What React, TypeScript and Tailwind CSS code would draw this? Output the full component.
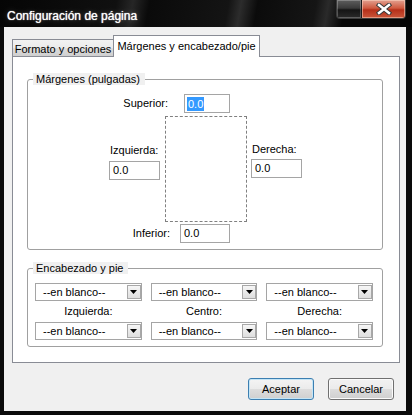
import React from "react";

function Field({ value, selected = false, width }: { value: string; selected?: boolean; width: string }) {
  return (
    <div className={`h-[19px] border border-[#a5a5a5] bg-white flex items-center pl-[2px] ${width}`}>
      <span className={selected ? "bg-[#3399ff] text-white px-[1px] leading-[14px]" : "px-[1px]"}>{value}</span>
    </div>
  );
}

function Combo() {
  return (
    <div className="h-[18px] border border-[#a5a5a5] bg-white flex items-center pl-[7px]">
      <span className="flex-1">--en blanco--</span>
      <div className="w-[14px] h-[14px] border border-[#a8a8a8] bg-[linear-gradient(#f6f6f6,#dedede)] flex items-center justify-center">
        <svg width="7" height="4" viewBox="0 0 7 4">
          <path d="M0 0h7L3.5 4z" fill="#000" />
        </svg>
      </div>
    </div>
  );
}

export default function App() {
  return (
    <div className="w-[412px] h-[415px] bg-[#0a0a0a] flex flex-col font-['Liberation_Sans',Arial,sans-serif] text-[11px] text-black overflow-hidden">
      {/* Title bar */}
      <div className="h-[27px] flex items-start bg-[linear-gradient(100deg,#050505_0%,#101010_28%,#262626_32%,#0a0a0a_36%,#141414_55%,#2c2c2c_58%,#0b0b0b_62%,#151515_76%,#2a2a2a_79%,#060606_83%)]">
        <span className="text-white text-[12px] leading-none pl-[7px] pt-[10px] [text-shadow:0_0_1px_#fff,0_0_6px_rgba(255,255,255,0.3)]">
          Configuración de página
        </span>
        <div className="ml-auto mr-[6px] flex h-[19px] border border-t-0 border-[#3c3c3c] rounded-b-[4px] overflow-hidden">
          <div className="w-[25px] h-full border-r border-[#1a1a1a] bg-[linear-gradient(#5e5e5e,#3a3a3a_45%,#151515_55%,#2a2a2a)] shadow-[inset_0_0_0_1px_rgba(255,255,255,0.25)]" />
          <div className="w-[43px] h-full flex items-center justify-center bg-[linear-gradient(#e2a090,#cf5a40_45%,#b5301a_55%,#c9563a)] shadow-[inset_0_0_0_1px_rgba(255,220,200,0.5)]">
            <svg width="16" height="12" viewBox="0 0 16 12">
              <path d="M3 2L13 10M13 2L3 10" stroke="#3a3a3a" strokeWidth="4.5" strokeLinecap="square" />
              <path d="M3 2L13 10M13 2L3 10" stroke="#fff" strokeWidth="2.5" strokeLinecap="square" />
            </svg>
          </div>
        </div>
      </div>

      {/* Client area */}
      <div className="flex-1 ml-[4px] mr-[6px] mb-[4px] bg-[#f0f0f0] flex flex-col pl-[8px] pt-[8px]">
        {/* Tabs */}
        <div className="flex items-end h-[22px] -mb-px relative z-10">
          <div className="w-[101px] h-[18px] border border-[#898c95] border-r-0 bg-[linear-gradient(#f2f2f2,#ebebeb_50%,#dddddd_50%,#cfcfcf)] flex items-center justify-center pt-[2px]">
            Formato y opciones
          </div>
          <div className="w-[147px] h-[22px] border border-[#898c95] border-b-0 bg-white flex items-center justify-center pb-[1px]">
            Márgenes y encabezado/pie
          </div>
        </div>

        {/* Tab panel */}
        <div className="w-[388px] h-[307px] border border-[#898c95] bg-white pl-[14px] pt-[22px]">
          {/* Márgenes group */}
          <div className="relative w-[356px] h-[171px] border border-[#a0a0a0] rounded-[3px] pt-[14px]">
            <span className="absolute -top-[7px] left-[5px] bg-[#f0f0f0] pl-[3px] pr-[5px] leading-[12px]">
              Márgenes (pulgadas)
            </span>

            <div className="flex items-center">
              <div className="w-[140px] text-right">Superior:</div>
              <div className="ml-[16px]">
                <Field value="0.0" selected width="w-[46px]" />
              </div>
            </div>

            <div className="flex mt-[3px] h-[106px]">
              <div className="ml-[81px] w-[51px] flex flex-col pt-[27px]">
                <span className="pl-[1px] leading-[14px]">Izquierda:</span>
                <div className="mt-[4px]">
                  <Field value="0.0" width="w-[51px]" />
                </div>
              </div>
              <div className="ml-[5px] w-[82px] h-[106px] border border-dashed border-[#808080]" />
              <div className="ml-[4px] w-[51px] flex flex-col pt-[26px]">
                <span className="pl-[1px] leading-[14px]">Derecha:</span>
                <div className="mt-[3px]">
                  <Field value="0.0" width="w-[51px]" />
                </div>
              </div>
            </div>

            <div className="flex items-center mt-[2px]">
              <div className="w-[142px] text-right">Inferior:</div>
              <div className="ml-[10px]">
                <Field value="0.0" width="w-[50px]" />
              </div>
            </div>
          </div>

          {/* Encabezado y pie group */}
          <div className="relative mt-[18px] w-[356px] h-[79px] border border-[#a0a0a0] rounded-[3px] pt-[14px] pl-[7px]">
            <span className="absolute -top-[7px] left-[5px] bg-[#f0f0f0] pl-[3px] pr-[5px] leading-[12px]">
              Encabezado y pie
            </span>
            <div className="w-[338px] grid grid-cols-3 gap-x-[9px]">
              <Combo />
              <Combo />
              <Combo />
              <div className="h-[21px] flex items-center justify-center">Izquierda:</div>
              <div className="h-[21px] flex items-center justify-center">Centro:</div>
              <div className="h-[21px] flex items-center justify-center">Derecha:</div>
              <Combo />
              <Combo />
              <Combo />
            </div>
          </div>
        </div>

        {/* Buttons */}
        <div className="flex justify-end gap-[14px] mt-[15px] pr-[12px]">
          <button className="w-[66px] h-[22px] rounded-[3px] border border-[#3c7fb1] bg-[linear-gradient(#f4f4f4,#ebebeb_50%,#dddddd_50%,#cfcfcf)] shadow-[inset_0_0_0_1px_#c4e5f6]">
            Aceptar
          </button>
          <button className="w-[66px] h-[22px] rounded-[3px] border border-[#707070] bg-[linear-gradient(#f2f2f2,#ebebeb_50%,#dddddd_50%,#cfcfcf)] shadow-[inset_0_0_0_1px_#fbfbfb]">
            Cancelar
          </button>
        </div>
      </div>
    </div>
  );
}
